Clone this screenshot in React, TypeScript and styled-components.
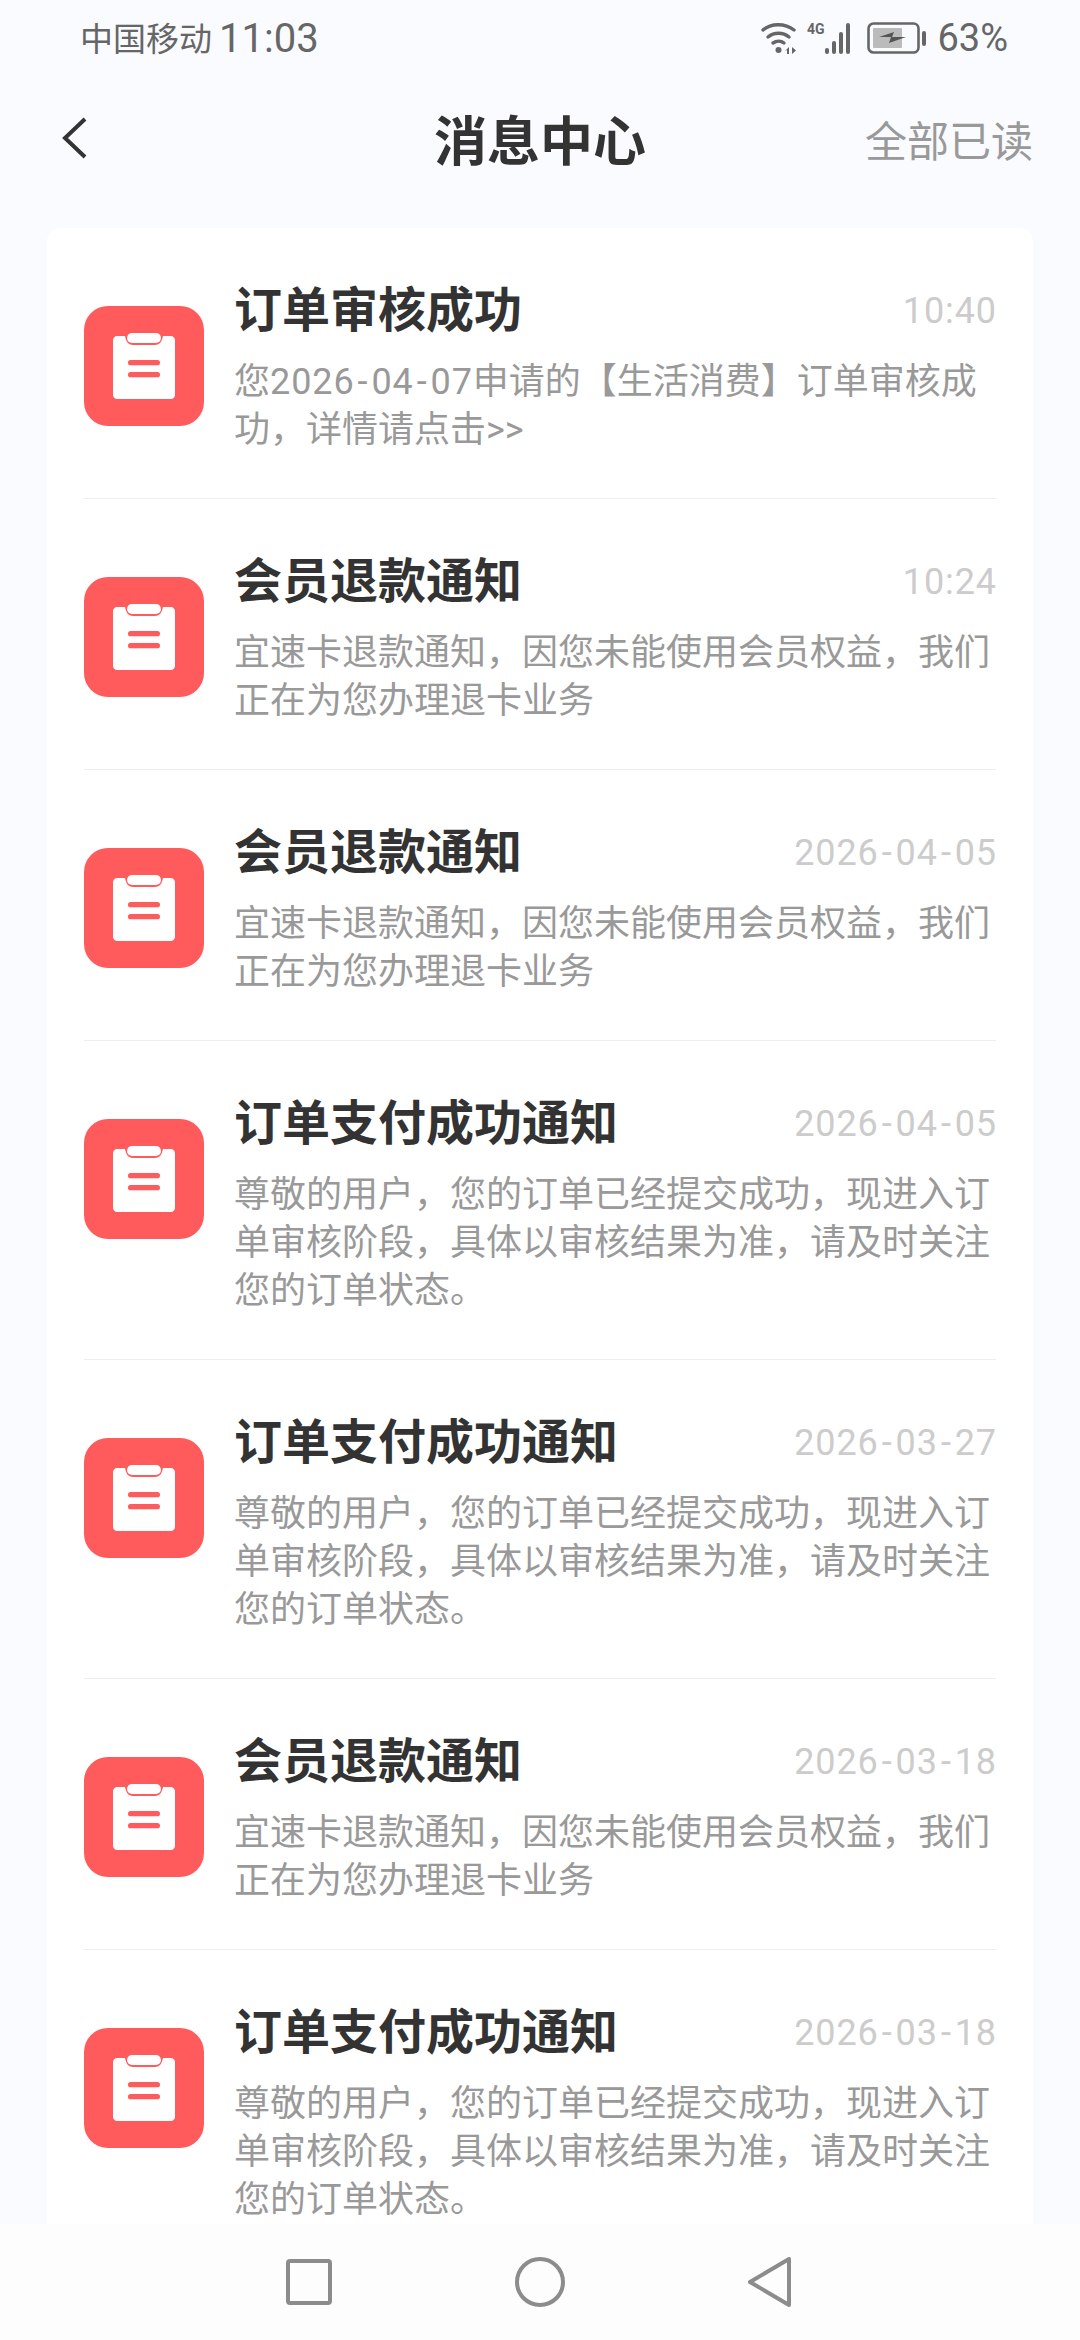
import styled, { createGlobalStyle } from "styled-components";

const GlobalStyle = createGlobalStyle`
  html, body {
    margin: 0;
    padding: 0;
    background: #f9fbff;
  }
  * {
    box-sizing: border-box;
  }
`;

const Page = styled.div`
  width: 1080px;
  height: 2340px;
  display: flex;
  flex-direction: column;
  overflow: hidden;
  background: #f9fbff;
  font-family: Roboto, "Noto Sans CJK SC", sans-serif;
`;

const StatusBar = styled.div`
  height: 76px;
  padding: 0 72px 0 80px;
  display: flex;
  align-items: center;
  justify-content: space-between;
  color: #666666;
  font-size: 33px;
  flex-shrink: 0;
`;

const Carrier = styled.div`
  display: flex;
  align-items: center;
  gap: 7px;
`;

const CarrierName = styled.span`
  margin-bottom: 3px;
`;

const Clock = styled.span`
  font-size: 40px;
`;

const StatusIcons = styled.div`
  display: flex;
  align-items: center;
  gap: 8px;
`;

const Battery = styled.span`
  font-size: 38px;
  margin-left: 2px;
`;

const Header = styled.div`
  height: 124px;
  padding: 0 47px 0 60px;
  position: relative;
  display: flex;
  align-items: center;
  justify-content: space-between;
  flex-shrink: 0;
`;

const PageTitle = styled.div`
  position: absolute;
  left: 0;
  right: 0;
  text-align: center;
  font-size: 53px;
  font-weight: 700;
  color: #333333;
`;

const ReadAll = styled.div`
  font-size: 42px;
  color: #999999;
`;

const Card = styled.div`
  flex: 1;
  min-height: 0;
  margin: 28px 47px 0;
  padding: 0 37px;
  background: #ffffff;
  border-radius: 14px 14px 0 0;
  overflow: hidden;
`;

const Row = styled.div`
  display: flex;
  align-items: flex-start;
  gap: 30px;
  padding: 44px 0;
  border-bottom: 1px solid #eeeeee;
`;

const IconTile = styled.div`
  width: 120px;
  height: 120px;
  margin-top: 34px;
  flex-shrink: 0;
  border-radius: 24px;
  background: #ff5a5c;
  display: flex;
  align-items: center;
  justify-content: center;
`;

const Content = styled.div`
  flex: 1;
  min-width: 0;
`;

const TitleLine = styled.div`
  display: flex;
  align-items: center;
  justify-content: space-between;
  height: 68px;
  margin-bottom: 18px;
`;

const Title = styled.div`
  font-size: 48px;
  font-weight: 700;
  color: #333333;
`;

const Time = styled.div`
  padding-top: 10px;
  margin-right: -1px;
  font-size: 36px;
  color: #cccccc;
`;

const BodyLine = styled.div`
  font-size: 36px;
  line-height: 48px;
  color: #999999;
  white-space: nowrap;
`;

// digits in the reference run wider than Roboto, hyphens especially
const Num = styled.span`
  letter-spacing: 0.9px;
`;

const Dash = styled.span`
  margin: 0 3px;
`;

const NavBar = styled.div`
  height: 116px;
  flex-shrink: 0;
  padding-right: 3px;
  background: #fdfdfd;
  display: flex;
  align-items: center;
  justify-content: center;
  gap: 183px;
`;

const refundLines = ["宜速卡退款通知，因您未能使用会员权益，我们", "正在为您办理退卡业务"];
const paidLines = [
  "尊敬的用户，您的订单已经提交成功，现进入订",
  "单审核阶段，具体以审核结果为准，请及时关注",
  "您的订单状态。",
];

const messages = [
  { title: "订单审核成功", time: "10:40", lines: ["您2026-04-07申请的【生活消费】订单审核成", "功，详情请点击>>"] },
  { title: "会员退款通知", time: "10:24", lines: refundLines },
  { title: "会员退款通知", time: "2026-04-05", lines: refundLines },
  { title: "订单支付成功通知", time: "2026-04-05", lines: paidLines },
  { title: "订单支付成功通知", time: "2026-03-27", lines: paidLines },
  { title: "会员退款通知", time: "2026-03-18", lines: refundLines },
  { title: "订单支付成功通知", time: "2026-03-18", lines: paidLines },
];

const renderNums = (text: string) =>
  text.split(/(\d{4}-\d{2}-\d{2}|\d{2}:\d{2})/).map((part, i) =>
    i % 2 === 1 ? (
      <Num key={i}>
        {part.split(/(-)/).map((p, j) => (p === "-" ? <Dash key={j}>-</Dash> : p))}
      </Num>
    ) : (
      part
    )
  );

const ClipboardIcon = () => (
  <svg width="62" height="66" viewBox="0 0 62 66">
    <path
      d="M4 3h8c1 5 3 9 8 9h22c5 0 7-4 8-9h8c2 0 4 2 4 4v55c0 2-2 4-4 4H4c-2 0-4-2-4-4V7c0-2 2-4 4-4z"
      fill="#fff"
    />
    <rect x="14" y="0" width="34" height="10" rx="5" fill="#fff" />
    <rect x="15" y="27" width="32" height="5.300" rx="2.650" fill="#ff5a5c" />
    <rect x="15" y="39" width="32" height="5.300" rx="2.650" fill="#ff5a5c" />
  </svg>
);

const BackIcon = () => (
  <svg width="30" height="44" viewBox="0 0 30 44">
    <path d="M25 3 5 22l20 19" fill="none" stroke="#333" strokeWidth="4" />
  </svg>
);

const WifiIcon = () => (
  <svg width="38" height="32" viewBox="0 0 38 32" fill="none" stroke="#666" strokeLinecap="round">
    <path d="M2 8C10 1 24 1 33 8" strokeWidth="3.400" />
    <path d="M7 15c6-5 15-5 21 0" strokeWidth="3.400" />
    <path d="M12 21c3.500-2.500 8-2.500 11 0" strokeWidth="3.400" />
    <circle cx="17.500" cy="28" r="3" fill="#666" stroke="none" />
    <path d="M28 25v7h-2v-4l-2 1zM31 25v7l4-3.500z" fill="#666" stroke="none" />
  </svg>
);

const SignalIcon = () => (
  <svg width="52" height="32" viewBox="0 0 52 32">
    <text x="0" y="12" fontFamily="Roboto, sans-serif" fontSize="14" fontWeight="700" fill="#666">
      4G
    </text>
    <rect x="18" y="26" width="4" height="6" rx="2" fill="#666" />
    <rect x="25" y="19" width="4" height="13" rx="2" fill="#666" />
    <rect x="32" y="10" width="4" height="22" rx="2" fill="#666" />
    <rect x="39" y="1" width="4" height="31" rx="2" fill="#666" />
  </svg>
);

const BatteryIcon = () => (
  <svg width="60" height="32" viewBox="0 0 60 32">
    <rect x="1.500" y="1.500" width="50" height="29" rx="5" fill="none" stroke="#666" strokeWidth="2.600" />
    <rect x="6" y="6" width="29" height="20" rx="1" fill="#bbbbbb" />
    <path d="M12 15 27 10l-2 5h14l-17 6 2-6z" fill="#555" />
    <rect x="55" y="9" width="4" height="15" rx="2" fill="#666" />
  </svg>
);

const SquareIcon = () => (
  <svg width="46" height="46" viewBox="0 0 46 46">
    <rect x="2" y="2" width="42" height="42" rx="2" fill="none" stroke="#8c8c8c" strokeWidth="4" />
  </svg>
);

const CircleIcon = () => (
  <svg width="50" height="50" viewBox="0 0 50 50">
    <circle cx="25" cy="25" r="23" fill="none" stroke="#8c8c8c" strokeWidth="4" />
  </svg>
);

const TriangleIcon = () => (
  <svg width="43" height="50" viewBox="0 0 43 50">
    <path d="M41 2v46L2 25z" fill="none" stroke="#8c8c8c" strokeWidth="4" strokeLinejoin="round" />
  </svg>
);

const App = () => {
  return (
    <Page>
      <GlobalStyle />
      <StatusBar>
        <Carrier>
          <CarrierName>中国移动</CarrierName>
          <Clock>11:03</Clock>
        </Carrier>
        <StatusIcons>
          <WifiIcon />
          <SignalIcon />
          <BatteryIcon />
          <Battery>63%</Battery>
        </StatusIcons>
      </StatusBar>
      <Header>
        <BackIcon />
        <PageTitle>消息中心</PageTitle>
        <ReadAll>全部已读</ReadAll>
      </Header>
      <Card>
        {messages.map((m, i) => (
          <Row key={i}>
            <IconTile>
              <ClipboardIcon />
            </IconTile>
            <Content>
              <TitleLine>
                <Title>{m.title}</Title>
                <Time>{renderNums(m.time)}</Time>
              </TitleLine>
              {m.lines.map((line, j) => (
                <BodyLine key={j}>{renderNums(line)}</BodyLine>
              ))}
            </Content>
          </Row>
        ))}
      </Card>
      <NavBar>
        <SquareIcon />
        <CircleIcon />
        <TriangleIcon />
      </NavBar>
    </Page>
  );
};

export default App;
